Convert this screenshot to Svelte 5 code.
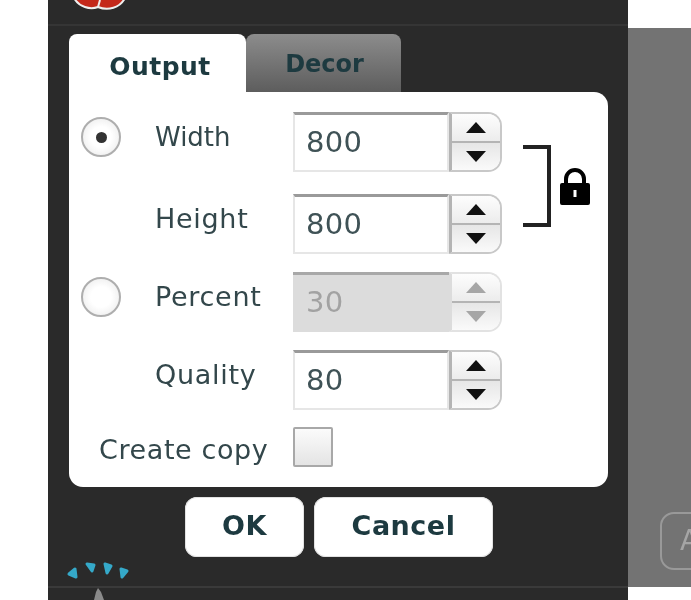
<script>
	let fields = [
		{ name: 'Width', value: '800', radio: 'on', wide: true },
		{ name: 'Height', value: '800' },
		{ name: 'Percent', value: '30', radio: 'off', disabled: true },
		{ name: 'Quality', value: '80' }
	];
</script>

<div class="page">
	<div class="margin"></div>
	<div class="panel">
		<div class="head">
			<svg class="logo-top" width="56" height="12" viewBox="0 0 56 12">
				<path d="M2 -2 C7 7 18 10 26 7 C36 11 48 8 53 -2 Z" fill="#c4281a" stroke="#eee" stroke-width="2" />
				<path d="M26 7 L28 0" stroke="#eee" stroke-width="2" />
			</svg>
		</div>
		<div class="body">
			<div class="tabs">
				<div class="tab active">Output</div>
				<div class="tab">Decor</div>
			</div>
			<div class="card">
				<div class="form">
					{#each fields as f}
						<div class="row" class:wide={f.wide}>
							<div class="radio-cell">
								{#if f.radio}
									<span class="radio">
										{#if f.radio === 'on'}<span class="dot"></span>{/if}
									</span>
								{/if}
							</div>
							<span class="label">{f.name}</span>
							<div class="spinner" class:disabled={f.disabled}>
								<div class="input">{f.value}</div>
								<div class="arrows">
									<div class="arrow up"><i></i></div>
									<div class="arrow down"><i></i></div>
								</div>
							</div>
						</div>
					{/each}
					<div class="copy-row">
						<span class="copy-label">Create copy</span>
						<span class="check"></span>
					</div>
				</div>
				<div class="bracket"></div>
				<svg class="lock" width="32" height="38" viewBox="0 0 32 38">
					<path d="M7 17 V11 a9 9 0 0 1 18 0 V17" fill="none" stroke="#000" stroke-width="4" />
					<path fill-rule="evenodd" d="M3 15 H29 a2 2 0 0 1 2 2 V35 a2 2 0 0 1 -2 2 H3 a2 2 0 0 1 -2 -2 V17 a2 2 0 0 1 2 -2 Z M14.5 22 V29 H17.5 V22 Z" fill="#000" />
				</svg>
			</div>
			<div class="buttons">
				<button class="ok">OK</button>
				<button class="cancel">Cancel</button>
			</div>
		</div>
		<div class="foot">
			<svg width="70" height="40" viewBox="0 0 70 40">
				<g fill="#35a9c9" stroke="#35a9c9" stroke-width="3" stroke-linejoin="round">
					<path d="M3 14 L9 9 L10 17 Z" />
					<path d="M21 4 L28 5 L26 11 Z" />
					<path d="M39 4 L45 6 L41 13 Z" />
					<path d="M55 9 L61 11 L56 17 Z" />
				</g>
				<path d="M28 40 L30 32 L32 28 L35 32 L38 40 Z" fill="#8a8a8a" />
			</svg>
		</div>
	</div>
	<div class="side">
		<div class="side-gray">
			<div class="side-btn">A</div>
		</div>
	</div>
</div>

<style>
	:global(body) {
		background: #fff;
	}

	.page {
		display: flex;
		width: 691px;
		height: 600px;
		overflow: hidden;
		font-family: 'DejaVu Sans', sans-serif;
		color: #33474b;
		filter: blur(0.7px);
	}

	.margin {
		width: 48px;
		flex: none;
	}

	.panel {
		width: 580px;
		flex: none;
		background: #2a2a2a;
		display: flex;
		flex-direction: column;
	}

	.head {
		height: 24px;
		flex: none;
		border-bottom: 2px solid #353535;
		margin-bottom: 8px;
		padding-left: 24px;
	}

	.logo-top {
		display: block;
	}

	.body {
		padding-left: 21px;
		height: 523px;
		flex: none;
	}

	.tabs {
		display: flex;
		height: 58px;
	}

	.tab {
		width: 155px;
		border-radius: 8px 8px 0 0;
		background: linear-gradient(#8c8c8c, #5d5d5d);
		color: #1d3a40;
		font-size: 24px;
		font-weight: bold;
		text-align: center;
		line-height: 60px;
		box-sizing: border-box;
		padding-left: 2px;
	}

	.tab.active {
		width: 177px;
		background: #fff;
		font-size: 25px;
		letter-spacing: 0.5px;
		line-height: 66px;
		padding-left: 5px;
	}

	.card {
		height: 395px;
		width: 539px;
		background: #fff;
		border-radius: 0 14px 14px 14px;
		box-sizing: border-box;
		padding: 20px 0 0 12px;
		display: flex;
		align-items: flex-start;
	}

	.form {
		display: flex;
		flex-direction: column;
		gap: 18px;
		flex: none;
	}

	.row {
		display: flex;
		align-items: center;
		height: 60px;
	}

	.row.wide {
		margin-bottom: 4px;
	}

	.radio-cell {
		width: 74px;
		flex: none;
		margin-bottom: 10px;
		height: 40px;
	}

	.radio {
		display: flex;
		align-items: center;
		justify-content: center;
		width: 40px;
		height: 40px;
		border-radius: 50%;
		border: 2px solid #aeaeae;
		box-sizing: border-box;
		background: radial-gradient(#fff 40%, #e6e6e6);
	}

	.dot {
		width: 11px;
		height: 11px;
		border-radius: 50%;
		background: #333;
	}

	.label {
		width: 138px;
		flex: none;
		font-size: 27px;
		margin-bottom: 12px;
		letter-spacing: 0.7px;
	}

	.wide .label {
		font-size: 26px;
		letter-spacing: 0;
		margin-bottom: 11px;
	}

	.spinner {
		display: flex;
		height: 60px;
		width: 209px;
		flex: none;
	}

	.input {
		width: 156px;
		flex: none;
		box-sizing: border-box;
		border: 2px solid #e6e6e6;
		border-top: 3px solid #9a9a9a;
		padding-left: 11px;
		font-size: 29px;
		letter-spacing: 0.3px;
		line-height: 55px;
		color: #3f5256;
	}

	.arrows {
		width: 53px;
		flex: none;
		box-sizing: border-box;
		border: 2px solid #c8c8c8;
		border-left: 3px solid #b4b4b4;
		border-radius: 0 14px 14px 0;
		overflow: hidden;
		display: flex;
		flex-direction: column;
	}

	.arrow {
		flex: 1;
		display: flex;
		align-items: center;
		justify-content: center;
		background: linear-gradient(#fdfdfd, #ececec);
	}

	.arrow.up {
		border-bottom: 2px solid #b4b4b4;
	}

	.arrow.down {
		background: linear-gradient(#e6e6e6, #fafafa);
	}

	.arrow i {
		width: 0;
		height: 0;
		border-left: 10px solid transparent;
		border-right: 10px solid transparent;
	}

	.up i {
		border-bottom: 11px solid #111;
	}

	.down i {
		border-top: 11px solid #111;
	}

	.disabled .input {
		background: #dcdcdc;
		color: #a2a2a2;
		border: none;
		border-top: 3px solid #a8a8a8;
		padding-left: 13px;
	}

	.disabled .arrows {
		border-color: #e2e2e2;
		border-left-color: #dcdcdc;
	}

	.disabled .up i {
		border-bottom-color: #a6a6a6;
	}

	.disabled .down i {
		border-top-color: #a6a6a6;
	}

	.copy-row {
		display: flex;
		align-items: flex-start;
		height: 40px;
		margin-top: -1px;
	}

	.copy-label {
		width: 212px;
		flex: none;
		padding-left: 18px;
		box-sizing: border-box;
		font-size: 27px;
		letter-spacing: 0.6px;
		line-height: 46px;
		white-space: nowrap;
	}

	.check {
		width: 40px;
		height: 40px;
		box-sizing: border-box;
		border: 2px solid #a8a8a8;
		border-radius: 2px;
		background: linear-gradient(#fbfbfb, #e4e4e4);
	}

	.bracket {
		width: 28px;
		height: 82px;
		flex: none;
		box-sizing: border-box;
		border: 4px solid #222;
		border-left: none;
		margin: 33px 0 0 21px;
	}

	.lock {
		flex: none;
		margin: 56px 0 0 8px;
	}

	.buttons {
		display: flex;
		gap: 10px;
		margin: 10px 0 0 116px;
	}

	button {
		height: 60px;
		border: none;
		border-radius: 12px;
		background: #fff;
		box-shadow: inset 0 0 0 1px #e2e2e2;
		font-family: inherit;
		font-size: 27px;
		font-weight: bold;
		letter-spacing: 0.5px;
		color: #1d3a40;
		padding: 0 0 3px;
	}

	.ok {
		width: 119px;
	}

	.cancel {
		width: 179px;
	}

	.foot {
		flex: 1;
		margin-top: 3px;
		padding-left: 18px;
		background: linear-gradient(#3a3a3a, #3a3a3a) 0 26px / 100% 2px no-repeat;
	}

	.foot svg {
		display: block;
	}

	.side {
		flex: 1;
		padding-top: 28px;
		height: 559px;
	}

	.side-gray {
		height: 559px;
		background: #737373;
		box-sizing: border-box;
		padding: 484px 0 0 32px;
		overflow: hidden;
	}

	.side-btn {
		width: 60px;
		height: 58px;
		box-sizing: border-box;
		border: 2px solid #999;
		border-radius: 14px;
		font-size: 28px;
		color: #a5a5a5;
		line-height: 54px;
		padding-left: 18px;
	}
</style>
